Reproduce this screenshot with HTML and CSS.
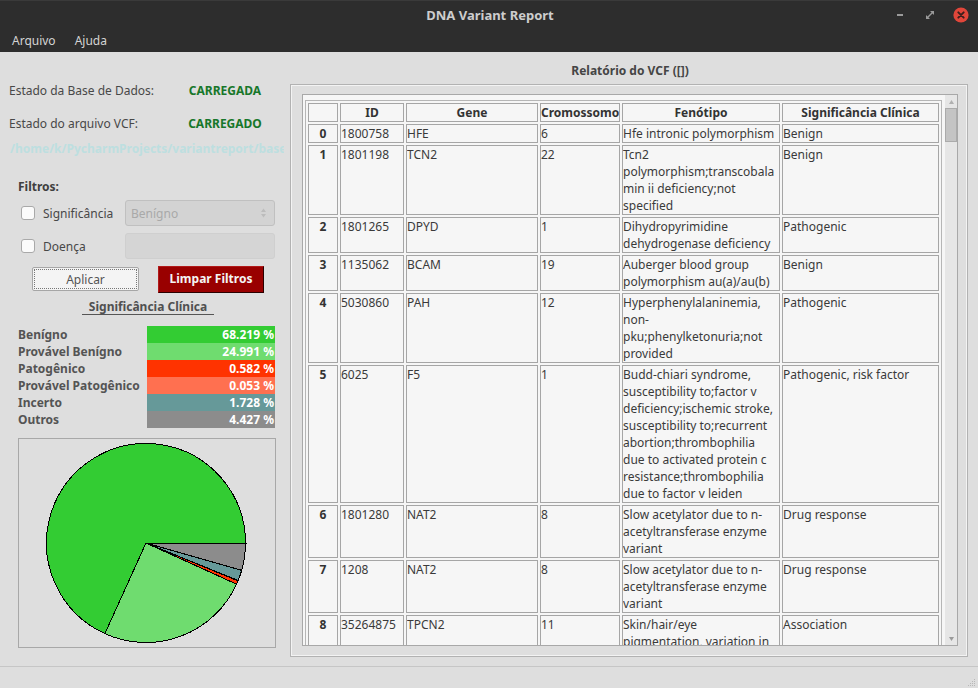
FILE: index.html
```html
<!DOCTYPE html>
<html lang="pt">
<head>
<meta charset="utf-8">
<title>DNA Variant Report</title>
<link rel="stylesheet" href="styles.css">
</head>
<body>
<div class="window">
  <header class="titlebar">
    <div class="tb-side"></div>
    <div class="tb-title">DNA Variant Report</div>
    <div class="tb-side tb-controls">
      <span class="ctl-min"></span>
      <svg class="ctl-max" width="8" height="8" viewBox="0 0 8 8"><path d="M4 0H8V4Z M0 4V8H4Z" fill="#9a9a9a"/><path d="M6.5 1.5L1.5 6.5" stroke="#9a9a9a" stroke-width="1.4"/></svg>
      <svg class="ctl-close" width="16" height="16" viewBox="0 0 16 16"><circle cx="8" cy="8" r="7.6" fill="#e0463a"/><path d="M5.3 5.3L10.7 10.7M10.7 5.3L5.3 10.7" stroke="#3a1f1c" stroke-width="1.9" stroke-linecap="round"/></svg>
    </div>
  </header>
  <nav class="menubar"><span class="menu-item">Arquivo</span><span class="menu-item">Ajuda</span></nav>

  <main class="main">
    <aside class="left">
      <div class="status-row first"><span>Estado da Base de Dados:</span><span class="ok">CARREGADA</span></div>
      <div class="status-row second"><span>Estado do arquivo VCF:</span><span class="ok">CARREGADO</span></div>
      <div class="path">/home/k/PycharmProjects/variantreport/base</div>

      <div class="filters-title">Filtros:</div>
      <div class="filter-row first">
        <span class="check"></span><span class="filter-label">Significância</span>
        <div class="combo"><span>Benígno</span><svg width="7" height="12" viewBox="0 0 7 12"><path d="M3.5 1.5L6 5H1Z M3.5 10.5L6 7H1Z" fill="#bcbcbc"/></svg></div>
      </div>
      <div class="filter-row second">
        <span class="check"></span><span class="filter-label">Doença</span>
        <div class="field"></div>
      </div>
      <div class="buttons">
        <button class="btn-apply"><span>Aplicar</span></button>
        <button class="btn-clear">Limpar Filtros</button>
      </div>

      <div class="legend-head"><span>Significância Clínica</span></div>
      <div class="legend">
        <div class="lg-row"><span class="lg-label">Benígno</span><span class="lg-bar c-ben">68.219 %</span></div>
        <div class="lg-row"><span class="lg-label">Provável Benígno</span><span class="lg-bar c-pben">24.991 %</span></div>
        <div class="lg-row"><span class="lg-label">Patogênico</span><span class="lg-bar c-pat">0.582 %</span></div>
        <div class="lg-row"><span class="lg-label">Provável Patogênico</span><span class="lg-bar c-ppat">0.053 %</span></div>
        <div class="lg-row"><span class="lg-label">Incerto</span><span class="lg-bar c-inc">1.728 %</span></div>
        <div class="lg-row"><span class="lg-label">Outros</span><span class="lg-bar c-out">4.427 %</span></div>
      </div>

      <div class="pie-box">
        <svg width="256" height="208" viewBox="0 0 256 208" shape-rendering="crispEdges">
          <g stroke="#000" stroke-width="1">
            <path d="M127 104L226.5 104A99.5 99.5 0 1 0 85.88 194.6Z" fill="#33cc33"/>
            <path d="M127 104L85.88 194.6A99.5 99.5 0 0 0 217.58 145.18Z" fill="#6fdc6f"/>
            <path d="M127 104L217.58 145.18A99.5 99.5 0 0 0 219.03 141.84Z" fill="#ff3300"/>
            <path d="M127 104L219.03 141.84A99.5 99.5 0 0 0 219.15 141.52Z" fill="#ff7050"/>
            <path d="M127 104L219.15 141.52A99.5 99.5 0 0 0 222.68 131.32Z" fill="#669999"/>
            <path d="M127 104L222.68 131.32A99.5 99.5 0 0 0 226.5 104Z" fill="#8c8c8c"/>
            <path d="M127 104H228" fill="none"/>
          </g>
        </svg>
      </div>
    </aside>

    <section class="right">
      <div class="report-title">Relatório do VCF ([])</div>
      <div class="frame">
        <div class="browser">
          <div class="viewport">
            <table class="vcf">
              <colgroup><col class="w0"><col class="w1"><col class="w2"><col class="w3"><col class="w4"><col class="w5"></colgroup>
              <thead>
                <tr><th></th><th>ID</th><th>Gene</th><th>Cromossomo</th><th>Fenótipo</th><th>Significância Clínica</th></tr>
              </thead>
              <tbody>
                <tr><td class="idx">0</td><td>1800758</td><td>HFE</td><td>6</td><td>Hfe intronic polymorphism</td><td>Benign</td></tr>
                <tr><td class="idx">1</td><td>1801198</td><td>TCN2</td><td>22</td><td>Tcn2<br>polymorphism;transcobala<br>min ii deficiency;not<br>specified</td><td>Benign</td></tr>
                <tr><td class="idx">2</td><td>1801265</td><td>DPYD</td><td>1</td><td>Dihydropyrimidine<br>dehydrogenase deficiency</td><td>Pathogenic</td></tr>
                <tr><td class="idx">3</td><td>1135062</td><td>BCAM</td><td>19</td><td>Auberger blood group<br>polymorphism au(a)/au(b)</td><td>Benign</td></tr>
                <tr><td class="idx">4</td><td>5030860</td><td>PAH</td><td>12</td><td>Hyperphenylalaninemia,<br>non-<br>pku;phenylketonuria;not<br>provided</td><td>Pathogenic</td></tr>
                <tr><td class="idx">5</td><td>6025</td><td>F5</td><td>1</td><td>Budd-chiari syndrome,<br>susceptibility to;factor v<br>deficiency;ischemic stroke,<br>susceptibility to;recurrent<br>abortion;thrombophilia<br>due to activated protein c<br>resistance;thrombophilia<br>due to factor v leiden</td><td>Pathogenic, risk factor</td></tr>
                <tr><td class="idx">6</td><td>1801280</td><td>NAT2</td><td>8</td><td>Slow acetylator due to n-<br>acetyltransferase enzyme<br>variant</td><td>Drug response</td></tr>
                <tr><td class="idx">7</td><td>1208</td><td>NAT2</td><td>8</td><td>Slow acetylator due to n-<br>acetyltransferase enzyme<br>variant</td><td>Drug response</td></tr>
                <tr><td class="idx">8</td><td>35264875</td><td>TPCN2</td><td>11</td><td>Skin/hair/eye<br>pigmentation, variation in</td><td>Association</td></tr>
              </tbody>
            </table>
          </div>
          <div class="scrollbar">
            <div class="sb-arrow"><svg width="5" height="4" viewBox="0 0 5 4"><path d="M2.5 0L5 4H0Z" fill="#b0b0b0"/></svg></div>
            <div class="sb-thumb"></div>
            <div class="sb-track"></div>
            <div class="sb-arrow"><svg width="5" height="4" viewBox="0 0 5 4"><path d="M0 0H5L2.5 4Z" fill="#9a9a9a"/></svg></div>
          </div>
        </div>
      </div>
    </section>
  </main>

  <footer class="statusbar">
    <svg class="grip" width="10" height="10" viewBox="0 0 10 10" fill="#b8b8b8"><rect x="8" y="2" width="1" height="1"/><rect x="6" y="4" width="1" height="1"/><rect x="8" y="4" width="1" height="1"/><rect x="4" y="6" width="1" height="1"/><rect x="6" y="6" width="1" height="1"/><rect x="8" y="6" width="1" height="1"/><rect x="2" y="8" width="1" height="1"/><rect x="4" y="8" width="1" height="1"/><rect x="6" y="8" width="1" height="1"/><rect x="8" y="8" width="1" height="1"/></svg>
  </footer>
</div>
</body>
</html>
```

FILE: styles.css
```css
* { box-sizing: border-box; }
html, body { margin: 0; padding: 0; }
body {
  width: 978px;
  height: 688px;
  overflow: hidden;
  background: #dedede;
  font-family: "Noto Sans", "Open Sans", sans-serif;
  font-size: 12px;
  color: #3c3c3c;
}
.window { display: flex; flex-direction: column; height: 688px; }

/* title bar */
.titlebar {
  height: 28px;
  background: #2d2d2d;
  border-top: 1px solid #3a3a3a;
  display: grid;
  grid-template-columns: 1fr auto 1fr;
  align-items: center;
}
.tb-title { font-weight: bold; font-size: 13px; color: #cdcdcd; padding-left: 2px; }
.tb-controls { display: flex; justify-content: flex-end; align-items: center; padding-right: 9px; }
.ctl-min { width: 6px; height: 2px; background: #9a9a9a; margin-right: 23px; margin-top: 1px; }
.ctl-max { margin-right: 19px; }
.ctl-close { display: block; }

.menubar {
  height: 24px;
  background: #2d2d2d;
  display: flex;
  align-items: center;
  padding-left: 12px;
  gap: 19px;
  color: #d4d4d4;
  font-size: 12px;
}

/* main */
.main { display: flex; height: 614px; }
.left { width: 290px; flex: none; padding-left: 9px; }

.status-row { display: grid; grid-template-columns: 166px 100px; line-height: 17px; color: #484848; }
.status-row.first { margin-top: 30px; }
.status-row.second { margin-top: 16px; }
.ok { color: #17772a; font-weight: bold; text-align: center; }
.path {
  margin-top: 8px;
  line-height: 17px;
  width: 275px;
  white-space: nowrap;
  overflow: hidden;
  color: #bddfe0;
  font-weight: bold;
  padding-left: 1px;
}
.filters-title { margin-top: 21px; margin-left: 9px; line-height: 17px; font-weight: bold; color: #3f3f3f; }

.filter-row { display: flex; align-items: center; height: 26px; padding-left: 12px; color: #484848; }
.filter-row.first { margin-top: 5px; }
.filter-row.second { margin-top: 7px; }
.check {
  width: 14px; height: 14px;
  background: #fbfbfb;
  border: 1px solid #a9a9a9;
  border-radius: 3px;
  margin-top: -1px;
}
.filter-label { margin-left: 8px; width: 82px; }
.combo, .field {
  width: 150px; height: 26px;
  border-radius: 3px;
}
.combo {
  background: #d3d3d3;
  border: 1px solid #c0c0c0;
  display: flex; align-items: center; justify-content: space-between;
  padding: 0 7px 0 5px;
  color: #a9a9a9;
}
.field { background: #d5d5d5; border: 1px solid #cfcfcf; }

.buttons { display: flex; align-items: flex-start; margin-top: 7px; height: 27px; }
.btn-apply {
  margin-left: 23px;
  margin-top: 1px;
  width: 107px; height: 24px;
  background: #f4f4f4;
  border: 1px solid #a6a6a6;
  border-radius: 2px;
  padding: 1px;
  font: inherit;
  color: #555;
}
.btn-apply span {
  display: flex; align-items: center; justify-content: center;
  height: 100%;
  border: 1px dotted #777;
}
.btn-clear {
  margin-left: 19px;
  width: 106px; height: 27px;
  background: #990000;
  border: 1px solid #b21a1a;
  border-right-color: #2a0000;
  border-bottom-color: #2a0000;
  font: inherit;
  font-weight: bold;
  color: #f4f4f4;
  padding: 0 0 2px;
}

.legend-head { margin-top: 5px; text-align: center; width: 275px; padding-left: 0; }
.legend-head span {
  display: inline-block;
  line-height: 14px;
  padding: 0 7px;
  border-bottom: 1px solid #555;
  font-weight: bold;
  color: #505050;
  margin-left: 3px;
}
.legend { margin-top: 11px; padding-left: 9px; }
.lg-row { display: flex; height: 17px; line-height: 17px; }
.lg-label { width: 129px; font-weight: bold; color: #545454; white-space: nowrap; }
.lg-bar { width: 128px; text-align: right; font-weight: bold; color: #fff; padding-right: 1px; }
.c-ben { background: #33cc33; }
.c-pben { background: #6fdc6f; }
.c-pat { background: #ff3300; }
.c-ppat { background: #ff7050; }
.c-inc { background: #669999; }
.c-out { background: #8c8c8c; }

.pie-box {
  margin-top: 10px;
  margin-left: 9px;
  width: 258px; height: 210px;
  border: 1px solid #a8a8a8;
}
.pie-box svg { display: block; }

/* right */
.right { width: 688px; flex: none; }
.report-title { margin-top: 10px; line-height: 17px; text-align: center; font-weight: bold; color: #454545; width: 678px; padding-left: 2px; }
.frame {
  margin-top: 5px;
  width: 678px; height: 573px;
  border: 1px solid #b2b2b2;
  box-shadow: inset 1px 1px 0 #f3f3f3, inset -1px -1px 0 #f3f3f3;
  padding: 9px 9px 10px 11px;
}
.browser {
  height: 100%;
  border: 1px solid #a8a8a8;
  background: #f6f6f6;
  display: flex;
}
.viewport { flex: 1; overflow: hidden; padding: 5px 0 0 2px; }

.vcf {
  table-layout: fixed;
  width: 637px;
  border: 1px solid #b6b6b6;
  border-spacing: 2px;
  color: #3a3a3a;
  font-size: 12px;
}
.w0 { width: 30px; } .w1 { width: 64px; } .w2 { width: 132px; }
.w3 { width: 80px; } .w4 { width: 158px; } .w5 { width: 157px; }
.vcf th, .vcf td {
  border: 1px solid #a6a6a6;
  padding: 0;
  line-height: 17px;
  vertical-align: top;
  text-align: left;
  white-space: nowrap;
  overflow: hidden;
}
.vcf th { font-weight: bold; text-align: center; color: #333; }
.vcf td.idx { font-weight: bold; text-align: center; color: #333; }

.scrollbar {
  width: 12px; flex: none;
  background: #e6e6e6;
  display: flex; flex-direction: column;
}
.sb-arrow { height: 13px; display: flex; align-items: center; justify-content: center; }
.sb-thumb { height: 34px; background: #c4c4c4; border: 1px solid #ababab; }
.sb-track { flex: 1; }

.statusbar {
  height: 22px;
  border-top: 1px solid #c6c6c6;
  display: flex; justify-content: flex-end; align-items: flex-end;
  padding: 0 2px 1px 0;
}
.grip { display: block; }
```
